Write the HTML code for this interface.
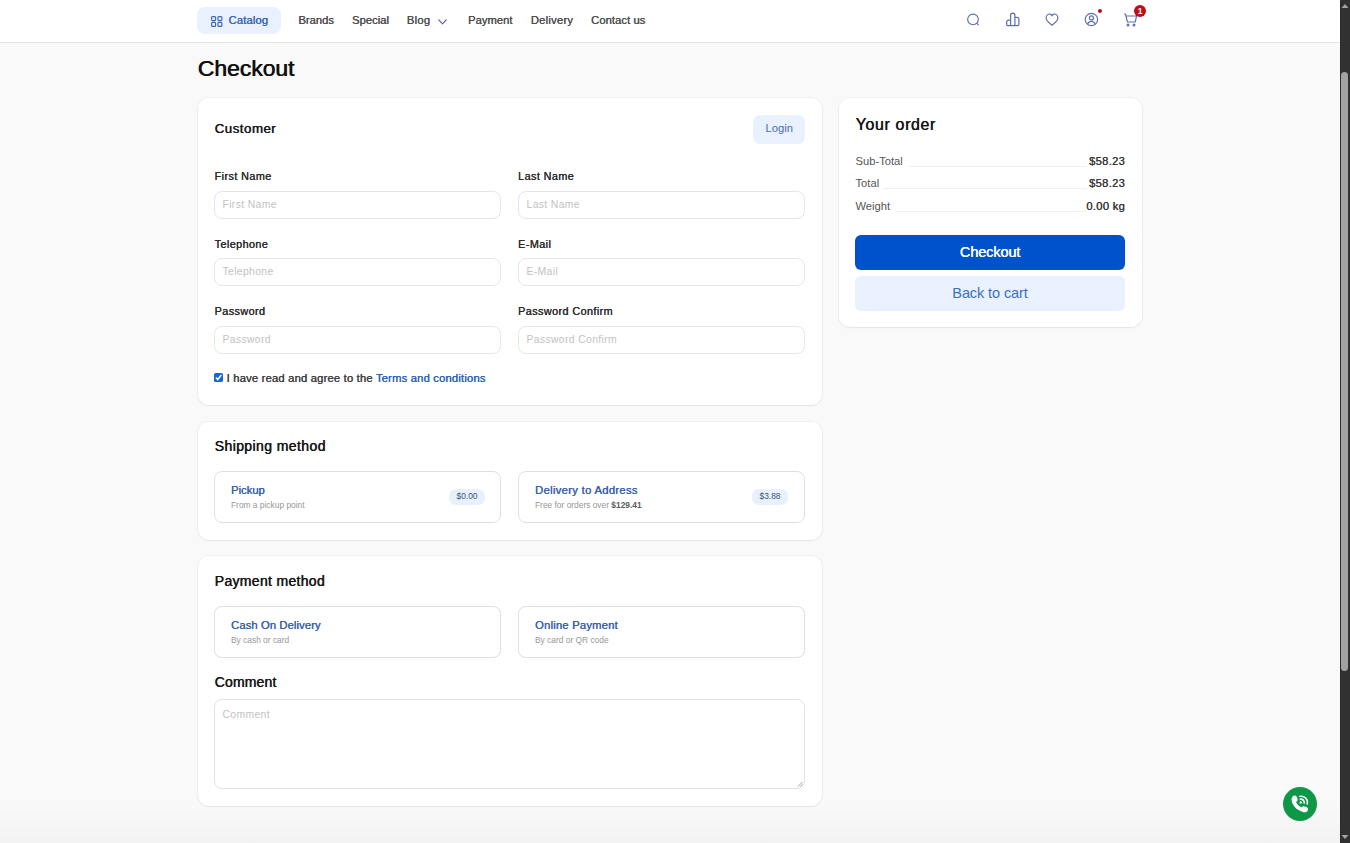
<!DOCTYPE html>
<html><head><meta charset="utf-8">
<style>
*{box-sizing:border-box;margin:0;padding:0}
html,body{width:1350px;height:843px;overflow:hidden;background:#f9f9f9;font-family:"Liberation Sans",sans-serif;}
.a{position:absolute;white-space:nowrap}
.t{position:absolute;white-space:nowrap;line-height:1}
#hdr{position:absolute;left:0;top:0;width:1340px;height:43px;background:#fff;border-bottom:1px solid #e6e6e6}
.nav{font-size:11.2px;font-weight:normal;color:#4e4e4e;text-shadow:0.35px 0 0 currentColor;letter-spacing:0.3px}
.card{position:absolute;background:#fff;border-radius:11px;box-shadow:0 0 0 1px rgba(0,0,0,0.035),0 1px 2px rgba(0,0,0,0.05)}
.h{font-weight:normal;color:#161616;text-shadow:0.5px 0 0 #161616}
.lbl{font-size:10.8px;font-weight:normal;color:#2a2a2a;text-shadow:0.35px 0 0 #2a2a2a;letter-spacing:0.42px}
.inp{position:absolute;border:1px solid #e6e6e6;border-radius:8px;background:#fff;width:287px;height:28px}
.ph{font-size:10.4px;color:#c2c2c2;letter-spacing:0.35px}
.opt{position:absolute;border:1px solid #e0e0e0;border-radius:8px;background:#fff;width:287px;height:52px}
.ot{font-size:11.2px;font-weight:normal;color:#3962ac;text-shadow:0.35px 0 0 currentColor}
.os{font-size:8.4px;color:#979797}
.badge{position:absolute;background:#e8f1fb;border-radius:7px;height:16px;font-size:8.4px;font-weight:normal;color:#3a5478;text-align:center;line-height:14.8px}
.row{font-size:11.2px;color:#555}
.val{font-size:11.2px;font-weight:normal;color:#3a3a3a;text-shadow:0.35px 0 0 currentColor;letter-spacing:0.3px;text-align:right}
.ln{position:absolute;height:1px;background:#f0f0f0}
</style></head><body>
<div class="a" style="left:0;top:805px;width:1340px;height:38px;background:linear-gradient(#f9f9f9,#f2f2f2)"></div>
<div id="hdr"></div>
<!-- catalog -->
<div class="a" style="left:197px;top:7px;width:84px;height:27px;background:#e8f1fd;border-radius:8px"></div>
<svg class="a" style="left:210px;top:15px" width="14" height="13" viewBox="0 0 14 13" fill="none" stroke="#3b66b5" stroke-width="1.15">
<rect x="1.6" y="1.6" width="4" height="4" rx="1"/><rect x="7.9" y="1.6" width="4" height="4" rx="1"/>
<rect x="1.6" y="7.4" width="4" height="4" rx="1"/><rect x="7.9" y="7.4" width="4" height="4" rx="1"/></svg>
<div class="t nav" style="left:228.5px;top:15px;color:#3b66b5;letter-spacing:0.15px">Catalog</div>
<div class="t nav" style="left:298.3px;top:15px;letter-spacing:0px">Brands</div>
<div class="t nav" style="left:352px;top:15px;letter-spacing:0.02px">Special</div>
<div class="t nav" style="left:406.7px;top:15px">Blog</div>
<svg class="a" style="left:437px;top:18px" width="11" height="8" viewBox="0 0 11 8" fill="none" stroke="#5a6eb0" stroke-width="1.15"><path d="M1.5 1.5 L5.5 5.8 L9.5 1.5"/></svg>
<div class="t nav" style="left:468px;top:15px;letter-spacing:0.02px">Payment</div>
<div class="t nav" style="left:530.7px;top:15px;letter-spacing:0.25px">Delivery</div>
<div class="t nav" style="left:591px;top:15px;letter-spacing:0.08px">Contact us</div>
<!-- header icons -->
<svg class="a" style="left:965px;top:11px" width="17" height="17" viewBox="0 0 17 17" fill="none" stroke="#5f6fae" stroke-width="1.15">
<circle cx="8" cy="8.4" r="5.3"/><path d="M11.9 12.3 L13.6 14"/></svg>
<svg class="a" style="left:1004px;top:11px" width="17" height="17" viewBox="0 0 17 17" fill="none" stroke="#5f6fae" stroke-width="1.2">
<path d="M6.6 14.6 H3.7 Q2.7 14.6 2.7 13.6 V11.1 Q2.7 9.1 4.7 9.1 H6.6 M6.6 14.6 V4.3 Q6.6 2.1 8.75 2.1 Q10.9 2.1 10.9 4.3 V14.6 M6.6 14.6 H13.9 Q14.9 14.6 14.9 13.6 V8.3 Q14.9 6.3 12.9 6.3 H10.9"/></svg>
<svg class="a" style="left:1043px;top:11px" width="17" height="17" viewBox="0 0 17 17" fill="none" stroke="#5f6fae" stroke-width="1.15">
<path d="M9 14.2 C7.5 13 5.2 11.2 3.9 9.4 C2.7 7.8 2.8 5 4.6 3.6 C6.2 2.5 8 3.1 9 4.6 C10 3.1 11.8 2.5 13.4 3.6 C15.2 5 15.3 7.8 14.1 9.4 C12.8 11.2 10.5 13 9 14.2 Z"/></svg>
<svg class="a" style="left:1083px;top:11px" width="17" height="17" viewBox="0 0 17 17" fill="none" stroke="#5f6fae" stroke-width="1.2">
<circle cx="8.4" cy="8.5" r="6.2"/><circle cx="8.4" cy="6.9" r="2"/><path d="M4.5 13.2 C5.3 11.2 6.8 10.4 8.4 10.4 C10 10.4 11.5 11.2 12.3 13.2"/></svg>
<div class="a" style="left:1098px;top:9px;width:4px;height:4px;border-radius:50%;background:#b0101c"></div>
<svg class="a" style="left:1122px;top:11px" width="17" height="17" viewBox="0 0 17 17" fill="none" stroke="#5f6fae" stroke-width="1.2">
<path d="M2 3 H3.5 L5.4 11 H13.2 L14.6 5 H4.2"/><circle cx="6" cy="14" r="0.9"/><circle cx="12" cy="14" r="0.9"/></svg>
<div class="a" style="left:1134px;top:4.8px;width:12px;height:12px;border-radius:50%;background:#c00c12;color:#fff;font-size:8.5px;font-weight:bold;text-align:center;line-height:12px">1</div>

<!-- title -->
<div class="t" style="left:197.5px;top:57px;font-size:22.9px;color:#111;letter-spacing:0px;text-shadow:0.7px 0 0 #111">Checkout</div>

<!-- customer card -->
<div class="card" style="left:198px;top:98px;width:623.5px;height:306.5px"></div>
<div class="t h" style="left:214.5px;top:122px;font-size:13.3px;letter-spacing:0.48px">Customer</div>
<div class="a" style="left:753px;top:115px;width:52px;height:29px;background:#e8f1fd;border-radius:7px"></div>
<div class="t" style="left:765.5px;top:122.5px;font-size:11.2px;color:#4a6fb5">Login</div>

<div class="t lbl" style="left:214.5px;top:171px">First Name</div>
<div class="t lbl" style="left:518px;top:171px">Last Name</div>
<div class="inp" style="left:214px;top:191px"></div>
<div class="inp" style="left:518px;top:191px"></div>
<div class="t ph" style="left:222.5px;top:199.5px">First Name</div>
<div class="t ph" style="left:526.5px;top:199.5px">Last Name</div>

<div class="t lbl" style="left:214.5px;top:238.5px">Telephone</div>
<div class="t lbl" style="left:518px;top:238.5px">E-Mail</div>
<div class="inp" style="left:214px;top:258px"></div>
<div class="inp" style="left:518px;top:258px"></div>
<div class="t ph" style="left:222.5px;top:267px">Telephone</div>
<div class="t ph" style="left:526.5px;top:267px">E-Mail</div>

<div class="t lbl" style="left:214.5px;top:306px">Password</div>
<div class="t lbl" style="left:518px;top:306px">Password Confirm</div>
<div class="inp" style="left:214px;top:325.5px"></div>
<div class="inp" style="left:518px;top:325.5px"></div>
<div class="t ph" style="left:222.5px;top:334.5px">Password</div>
<div class="t ph" style="left:526.5px;top:334.5px">Password Confirm</div>

<div class="a" style="left:214px;top:372.9px;width:9.2px;height:9px;border-radius:1.6px;background:#1766d8"></div>
<svg class="a" style="left:214px;top:372.9px" width="9" height="9" viewBox="0 0 9 9" fill="none" stroke="#fff" stroke-width="1.5"><path d="M1.9 4.6 L3.7 6.5 L7.3 2"/></svg>
<div class="t" style="left:226.5px;top:372.5px;font-size:11.2px;font-weight:normal;color:#404040;text-shadow:0.35px 0 0 currentColor;letter-spacing:0.2px">I have read and agree to the <span style="color:#2e63b5">Terms and conditions</span></div>

<!-- shipping card -->
<div class="card" style="left:198px;top:421.5px;width:623.5px;height:118.3px"></div>
<div class="t h" style="left:214.5px;top:439px;font-size:14px;letter-spacing:0.4px">Shipping method</div>
<div class="opt" style="left:214px;top:470.5px"></div>
<div class="opt" style="left:518px;top:470.5px"></div>
<div class="t ot" style="left:231px;top:484.5px;letter-spacing:0px">Pickup</div>
<div class="t os" style="left:231px;top:500.5px">From a pickup point</div>
<div class="badge" style="left:449px;top:489px;width:36px">$0.00</div>
<div class="t ot" style="left:535px;top:484.5px;letter-spacing:0.33px">Delivery to Address</div>
<div class="t os" style="left:535px;top:500.5px">Free for orders over <b style="color:#5a5a5a">$129.41</b></div>
<div class="badge" style="left:752px;top:489px;width:36px">$3.88</div>

<!-- payment card -->
<div class="card" style="left:198px;top:555.7px;width:623.5px;height:250.3px"></div>
<div class="t h" style="left:214.5px;top:573.5px;font-size:14px;letter-spacing:0.32px">Payment method</div>
<div class="opt" style="left:214px;top:606px;height:52px"></div>
<div class="opt" style="left:518px;top:606px;height:52px"></div>
<div class="t ot" style="left:231px;top:619.8px;letter-spacing:0.12px">Cash On Delivery</div>
<div class="t os" style="left:231px;top:635.8px">By cash or card</div>
<div class="t ot" style="left:535px;top:619.8px;letter-spacing:0.23px">Online Payment</div>
<div class="t os" style="left:535px;top:635.8px">By card or QR code</div>
<div class="t h" style="left:214.5px;top:674.5px;font-size:14px;letter-spacing:0.15px">Comment</div>
<div class="a" style="left:214px;top:699px;width:591px;height:90px;border:1px solid #e3e3e3;border-radius:8px;background:#fff"></div>
<div class="t ph" style="left:222.5px;top:710px">Comment</div>
<svg class="a" style="left:797px;top:781px" width="6" height="6" viewBox="0 0 6 6" stroke="#888" stroke-width="0.8"><path d="M5.5 1 L1 5.5 M5.5 3.5 L3.5 5.5"/></svg>

<!-- order card -->
<div class="card" style="left:839px;top:98px;width:303px;height:229px"></div>
<div class="t h" style="left:855.5px;top:116.5px;font-size:15.9px;letter-spacing:0.67px">Your order</div>
<div class="t row" style="left:855.5px;top:155.5px">Sub-Total</div>
<div class="t val" style="right:225px;top:155.5px">$58.23</div>
<div class="t row" style="left:855.5px;top:178px">Total</div>
<div class="t val" style="right:225px;top:178px">$58.23</div>
<div class="t row" style="left:855.5px;top:200.5px">Weight</div>
<div class="t val" style="right:225px;top:200.5px">0.00 kg</div>
<div class="ln" style="left:908px;top:165.5px;width:179px"></div>
<div class="ln" style="left:883px;top:188px;width:204px"></div>
<div class="ln" style="left:896px;top:210.5px;width:189px"></div>
<div class="a" style="left:855px;top:235px;width:270px;height:34.5px;background:#0052cc;border-radius:6px"></div>
<div class="t" style="left:855px;top:244.5px;width:270px;text-align:center;font-size:14.5px;color:#fff;text-shadow:0.3px 0 0 #fff;letter-spacing:-0.1px">Checkout</div>
<div class="a" style="left:855px;top:276px;width:270px;height:35px;background:#e8f1fd;border-radius:6px"></div>
<div class="t" style="left:855px;top:285.5px;width:270px;text-align:center;font-size:14.5px;color:#3d6fc0;letter-spacing:-0.1px">Back to cart</div>

<!-- phone -->
<div class="a" style="left:1283px;top:786.5px;width:34px;height:34px;border-radius:50%;background:#0e9746"></div>
<svg class="a" style="left:1290px;top:794px" width="20" height="20" viewBox="0 0 20 20" fill="#fff">
<path d="M2.5 2.8 Q3.3 1.6 4.6 1.6 L5.6 1.8 Q6.6 2.1 7 3.2 L7.6 5.6 Q7.8 6.8 6.8 7.5 L5.9 8.1 Q7.5 11.6 11.3 13.6 L12 12.8 Q12.8 11.9 14 12.3 L16.4 13.1 Q17.6 13.5 17.8 14.6 L17.9 15.6 Q18 17.1 16.8 17.8 Q15.6 18.6 13.8 18.2 Q8 17 4.3 12.6 Q1.6 9.2 1.5 5.4 Q1.5 3.8 2.5 2.8 Z"/>
<path d="M9.6 2.4 A6.2 6.2 0 0 1 17.2 10" fill="none" stroke="#fff" stroke-width="1.5" stroke-linecap="round"/>
<path d="M10.2 5.2 A3.4 3.4 0 0 1 14.2 9.2" fill="none" stroke="#fff" stroke-width="1.5" stroke-linecap="round"/>
<path d="M10.8 7 L12.4 8.5 L10.8 10 L9.3 8.5 Z"/></svg>
<!-- scrollbar -->
<div class="a" style="left:1340px;top:0;width:10px;height:843px;background:#313131;border-left:1px solid #2a2a2a"></div>
<div class="a" style="left:1340.9px;top:71.5px;width:7.2px;height:599px;background:#a2a2a2;border-radius:3.6px"></div>
<svg class="a" style="left:1340px;top:0" width="10" height="12" viewBox="0 0 10 12" fill="#a3a3a3"><path d="M1.5 8 L5 4 L8.5 8 Z"/></svg>
<svg class="a" style="left:1340px;top:831px" width="10" height="12" viewBox="0 0 10 12" fill="#a3a3a3"><path d="M1.5 4 L5 8 L8.5 4 Z"/></svg>
</body></html>
